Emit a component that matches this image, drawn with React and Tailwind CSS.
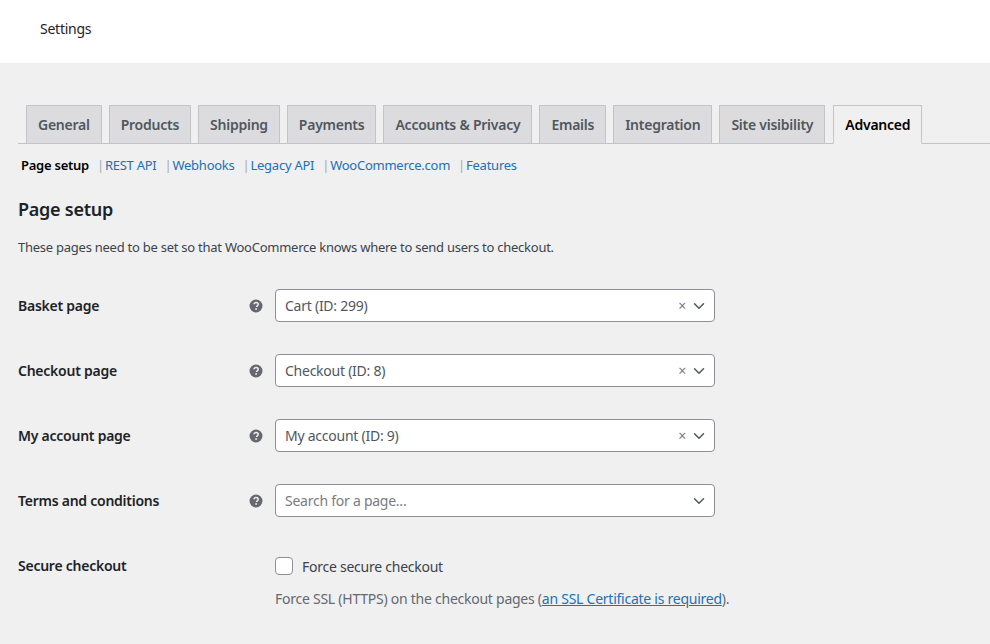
import React from 'react';
import { ChevronDown } from 'lucide-react';

const tabs = ['General', 'Products', 'Shipping', 'Payments', 'Accounts & Privacy', 'Emails', 'Integration', 'Site visibility', 'Advanced'];
const sections = ['REST API', 'Webhooks', 'Legacy API', 'WooCommerce.com', 'Features'];
const rows = [
    { label: 'Basket page', value: 'Cart (ID: 299)' },
    { label: 'Checkout page', value: 'Checkout (ID: 8)' },
    { label: 'My account page', value: 'My account (ID: 9)' },
    { label: 'Terms and conditions', placeholder: 'Search for a page...' },
];

const HelpTip = () => (
    <svg viewBox="0 0 14 14" className="w-[14px] h-[14px]">
        <circle cx="7" cy="7" r="6.5" fill="#646970" />
        <path d="M4.9 5.3c.1-1.2 1-1.9 2.2-1.9 1.2 0 2.1.7 2.1 1.8 0 .8-.5 1.2-1 1.6-.5.3-.7.6-.7 1.1" fill="none" stroke="#f0f0f1" strokeWidth="1.5" />
        <rect x="6.3" y="9.2" width="1.6" height="1.6" fill="#f0f0f1" />
    </svg>
);

const App = () => {
    return (
        <div className="w-[990px] h-[644px] overflow-hidden bg-[#f0f0f1] text-[14px] text-[#3c434a] font-['Noto_Sans',sans-serif] tracking-[-0.25px]">
            <div className="h-[63px] bg-white pl-[40px] pt-[19px] text-[#1d2327] leading-[20px]">Settings</div>

            <div className="mt-[42px] ml-[18px] pl-[8px] h-[39px] flex gap-[7px] border-b border-[#c3c4c7]">
                {tabs.map((tab) => (
                    <div
                        key={tab}
                        className={`h-[39px] px-[11px] border border-[#c3c4c7] flex items-center font-semibold leading-[20px] ${
                            tab === 'Advanced' ? 'bg-[#f0f0f1] border-b-[#f0f0f1] text-black ml-[1px]' : 'bg-[#dcdcde] text-[#50575e]'
                        }`}
                    >
                        {tab}
                    </div>
                ))}
            </div>

            <div className="mt-[11px] ml-[21px] h-[20px] flex items-center text-[13px] leading-[20px] whitespace-nowrap">
                <span className="font-semibold text-black">Page setup</span>
                {sections.map((s) => (
                    <span key={s} className="flex items-center">
                        <span className="ml-[8px] mr-[1px] text-[#a7aaad]">|</span>
                        <a className="text-[#2271b1]">{s}</a>
                    </span>
                ))}
            </div>

            <h2 className="mt-[22px] ml-[18px] text-[18px] leading-[24px] font-semibold text-[#1d2327]">Page setup</h2>
            <p className="mt-[16px] ml-[18px] text-[13px] leading-[20px]">These pages need to be set so that WooCommerce knows where to send users to checkout.</p>

            <div className="mt-[32px] ml-[18px] flex flex-col gap-[32px]">
                {rows.map((row) => (
                    <div key={row.label} className="flex items-center h-[33px]">
                        <div className="w-[231px] font-semibold text-[#1d2327]">{row.label}</div>
                        <HelpTip />
                        <div className="ml-[12px] w-[440px] h-[33px] bg-white border border-[#8c8f94] rounded-[4px] flex items-center pl-[9px] pr-[6px]">
                            <span className={`flex-1 ${row.value ? 'text-[#50575e]' : 'text-[#787c82]'}`}>{row.value || row.placeholder}</span>
                            {row.value && <span className="text-[#787c82] text-[14px] leading-none mr-[4px]">×</span>}
                            <ChevronDown className="w-[18px] h-[18px] text-[#50575e]" strokeWidth={2} />
                        </div>
                    </div>
                ))}
            </div>

            <div className="mt-[39px] ml-[18px] flex">
                <div className="w-[257px] font-semibold text-[#1d2327] leading-[20px] pt-[0px]">Secure checkout</div>
                <div>
                    <label className="flex items-center h-[20px]">
                        <span className="w-[18px] h-[18px] bg-white border border-[#8c8f94] rounded-[4px]" />
                        <span className="ml-[9px] text-[#3c434a]">Force secure checkout</span>
                    </label>
                    <p className="mt-[13px] leading-[20px] text-[#646970]">
                        Force SSL (HTTPS) on the checkout pages (<a className="text-[#2271b1] underline">an SSL Certificate is required</a>).
                    </p>
                </div>
            </div>
        </div>
    );
};

export default App;
